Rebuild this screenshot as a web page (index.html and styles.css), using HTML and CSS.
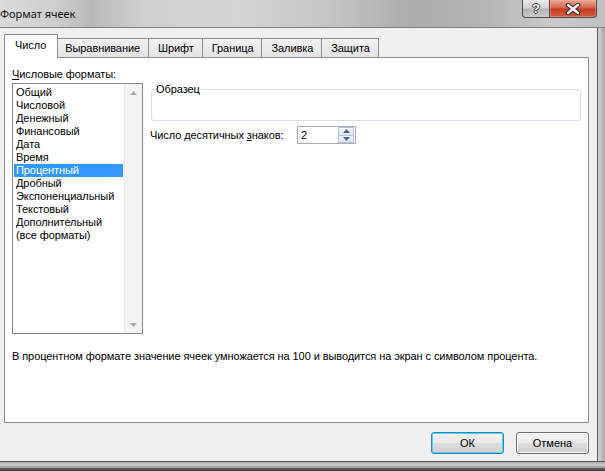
FILE: index.html
```html
<!DOCTYPE html>
<html lang="ru">
<head>
  <meta charset="UTF-8" />
  <title>Формат ячеек</title>
  <link rel="stylesheet" href="styles.css">
</head>
<body>
  <div class="window">
    <div class="titlebar">
      <span class="title">Формат ячеек</span>
      <div class="caption-btns">
        <div class="cap-btn help">?</div>
        <div class="cap-btn close">
          <svg width="16" height="12" viewBox="0 0 16 12">
            <path d="M3 2 L13 10 M13 2 L3 10" stroke="#3a3030" stroke-width="4.6" stroke-linecap="round" fill="none"/>
            <path d="M3 2 L13 10 M13 2 L3 10" stroke="#f6f6f6" stroke-width="2.4" stroke-linecap="round" fill="none"/>
          </svg>
        </div>
      </div>
    </div>

    <div class="frame-mid">
      <div class="client">
        <ul class="tabs">
          <li class="tab active">Число</li>
          <li class="tab">Выравнивание</li>
          <li class="tab">Шрифт</li>
          <li class="tab">Граница</li>
          <li class="tab">Заливка</li>
          <li class="tab">Защита</li>
        </ul>

        <div class="panel">
          <div class="formats">
            <div class="label"><u>Ч</u>исловые форматы:</div>
            <div class="listbox">
              <ul class="items">
                <li>Общий</li>
                <li>Числовой</li>
                <li>Денежный</li>
                <li>Финансовый</li>
                <li>Дата</li>
                <li>Время</li>
                <li class="selected">Процентный</li>
                <li>Дробный</li>
                <li>Экспоненциальный</li>
                <li>Текстовый</li>
                <li>Дополнительный</li>
                <li>(все форматы)</li>
              </ul>
              <div class="scrollbar">
                <div class="arrow">
                  <svg width="7" height="4" viewBox="0 0 7 4"><path d="M0 4 L3.5 0 L7 4 Z" fill="#a9a9a9"/></svg>
                </div>
                <div class="track"></div>
                <div class="arrow">
                  <svg width="7" height="4" viewBox="0 0 7 4"><path d="M0 0 L7 0 L3.5 4 Z" fill="#a9a9a9"/></svg>
                </div>
              </div>
            </div>
          </div>

          <div class="options">
            <fieldset class="sample">
              <legend>Образец</legend>
              <div class="sample-body"></div>
            </fieldset>
            <div class="decimals">
              <span class="decimals-label">Число десятичных <u>з</u>наков:</span>
              <div class="spin">
                <span class="spin-value">2</span>
                <div class="spin-btns">
                  <div class="spin-btn">
                    <svg width="7" height="4" viewBox="0 0 7 4"><path d="M0 4 L3.5 0 L7 4 Z" fill="#4d6185"/></svg>
                  </div>
                  <div class="spin-btn">
                    <svg width="7" height="4" viewBox="0 0 7 4"><path d="M0 0 L7 0 L3.5 4 Z" fill="#4d6185"/></svg>
                  </div>
                </div>
              </div>
            </div>
          </div>

          <p class="description">В процентном формате значение ячеек умножается на 100 и выводится на экран с символом процента.</p>
        </div>

        <div class="actions">
          <button class="btn default">ОК</button>
          <button class="btn">Отмена</button>
        </div>
      </div>
      <div class="frame-right"></div>
    </div>

    <div class="frame-bottom"></div>
  </div>
</body>
</html>
```

FILE: styles.css
```css
 body {
   margin: 0;
   padding: 0;
   background: #4a4a4a;
   font-family: "Liberation Sans", Tahoma, Arial, sans-serif;
   font-size: 11px;
   letter-spacing: -0.08px;
   color: #000;
   overflow: hidden;
 }

 .window {
   width: 605px;
   height: 471px;
   display: flex;
   flex-direction: column;
 }

 /* title bar */
 .titlebar {
   height: 27px;
   flex-shrink: 0;
   display: flex;
   justify-content: space-between;
   align-items: flex-start;
   border-bottom: 1px solid #7c7c7c;
   background: linear-gradient(to right, #dadada 0%, #cfcfcf 9%, #b9b9b9 15%, #d1d1d1 24%, #d5d5d5 40%, #c4c4c4 55%, #acacac 68%, #b5b5b5 80%, #cbcbcb 92%, #bfbfbf 100%);
 }

 .title {
   font-family: "Noto Sans", "Open Sans", sans-serif;
   font-size: 11px;
   letter-spacing: 0;
   line-height: 16px;
   margin-top: 6px;
   color: #111;
 }

 .caption-btns {
   display: flex;
   margin-right: 8px;
 }

 .cap-btn {
   height: 18px;
   box-sizing: border-box;
   border: 1px solid #4b4b4b;
   border-top: none;
   display: flex;
   align-items: center;
   justify-content: center;
 }

 .help {
   width: 27px;
   border-right: none;
   border-bottom-left-radius: 4px;
   background: linear-gradient(#e9e9e9 0%, #d4d4d4 45%, #b4b4b4 55%, #cdcdcd 100%);
   font-weight: bold;
   font-size: 13px;
   color: #f4f4f4;
   text-shadow: 1px 0 #444, -1px 0 #444, 0 1px #444, 0 -1px #444;
 }

 .close {
   width: 48px;
   border-bottom-right-radius: 4px;
   background: linear-gradient(#e9a897 0%, #d66a51 42%, #c23c22 55%, #d45c40 100%);
   box-shadow: inset 0 0 0 1px rgba(255, 180, 160, 0.4);
 }

 /* middle: client + right frame */
 .frame-mid {
   display: flex;
   height: 433px;
   flex-shrink: 0;
 }

 .client {
   width: 597px;
   box-sizing: border-box;
   background: #f0f0f0;
   padding: 6px 8px 0 4px;
 }

 .frame-right {
   width: 8px;
   background: linear-gradient(to right, #5a5a5a 0, #5a5a5a 1px, #d2d2d2 1px, #c4c4c4 50%, #a6a6a6 75%, #bcbcbc 100%);
 }

 .frame-bottom {
   height: 10px;
   border-top: 1px solid #585858;
   background: linear-gradient(#a9a9a9 0%, #cfcfcf 35%, #9d9d9d 60%, #545454 75%, #3e3e3e 100%);
 }

 /* tabs */
 .tabs {
   list-style: none;
   margin: 0;
   padding: 0;
   display: flex;
   align-items: flex-end;
   height: 23px;
 }

 .tab {
   height: 19px;
   box-sizing: border-box;
   line-height: 18px;
   padding: 0 8px 0 9px;
   margin-left: -1px;
   border: 1px solid #898c95;
   border-bottom: none;
   background: linear-gradient(#f2f2f2, #e3e3e3);
 }

 .tab.active {
   position: relative;
   z-index: 1;
   height: 24px;
   margin-left: 0;
   margin-bottom: -1px;
   margin-right: -2px;
   padding: 0 11px 0 10px;
   line-height: 21px;
   background: #fff;
 }

 /* panel */
 .panel {
   height: 366px;
   box-sizing: border-box;
   background: #fff;
   border: 1px solid #898c95;
   padding: 10px 7px 0 7px;
   display: grid;
   grid-template-columns: 131px 1fr;
   grid-template-rows: auto 1fr;
   column-gap: 8px;
 }

 .label {
   line-height: 13px;
   margin-bottom: 2px;
 }

 .listbox {
   height: 251px;
   box-sizing: border-box;
   border: 1px solid #828790;
   display: flex;
 }

 .items {
   list-style: none;
   margin: 0;
   padding: 2px 1px 0 1px;
   flex: 1;
 }

 .items li {
   line-height: 13px;
   padding-left: 2px;
   white-space: nowrap;
 }

 .items li.selected {
   background: #3399ff;
   color: #fff;
 }

 .scrollbar {
   width: 17px;
   display: flex;
   flex-direction: column;
   background: #f4f4f4;
   border-left: 1px solid #e8e8e8;
 }

 .scrollbar .arrow {
   height: 17px;
   display: flex;
   align-items: center;
   justify-content: center;
 }

 .scrollbar .track {
   flex: 1;
 }

 .options {
   padding-top: 15px;
 }

 .sample {
   margin: 0;
   padding: 0 3px;
   border: 1px solid #d5dfe5;
   border-radius: 3px;
   min-width: 0;
 }

 .sample legend {
   padding: 0 1px;
   line-height: 13px;
 }

 .sample-body {
   height: 24px;
 }

 .decimals {
   display: flex;
   align-items: center;
   margin-top: 5px;
 }

 .decimals-label {
   width: 147px;
   margin-left: -1px;
 }

 .spin {
   width: 59px;
   height: 18px;
   box-sizing: border-box;
   border: 1px solid #abadb3;
   display: flex;
   align-items: stretch;
 }

 .spin-value {
   flex: 1;
   padding-left: 3px;
   line-height: 16px;
 }

 .spin-btns {
   width: 16px;
   display: flex;
   flex-direction: column;
   margin-right: 1px;
 }

 .spin-btn {
   flex: 1;
   display: flex;
   align-items: center;
   justify-content: center;
   background: linear-gradient(#f2f5f9, #dbe3ee);
   border: 1px solid #b8c4d6;
 }

 .spin-btn + .spin-btn {
   border-top: none;
 }

 .description {
   grid-column: 1 / span 2;
   margin: 16px 0 0 0;
   line-height: 13px;
 }

 /* bottom buttons */
 .actions {
   display: flex;
   justify-content: flex-end;
   gap: 12px;
   margin-top: 9px;
 }

 .btn {
   font-family: "Liberation Sans", Tahoma, Arial, sans-serif;
   font-size: 11px;
   color: #000;
   width: 73px;
   height: 22px;
   padding: 0;
   border: 1px solid #707070;
   border-radius: 3px;
   background: linear-gradient(#f2f2f2 0%, #ebebeb 48%, #dddddd 52%, #cfcfcf 100%);
   box-shadow: inset 0 0 0 1px #fcfcfc;
 }

 .btn.default {
   border-color: #3c7fb1;
   box-shadow: inset 0 0 0 1px #48d8fb;
 }
```
